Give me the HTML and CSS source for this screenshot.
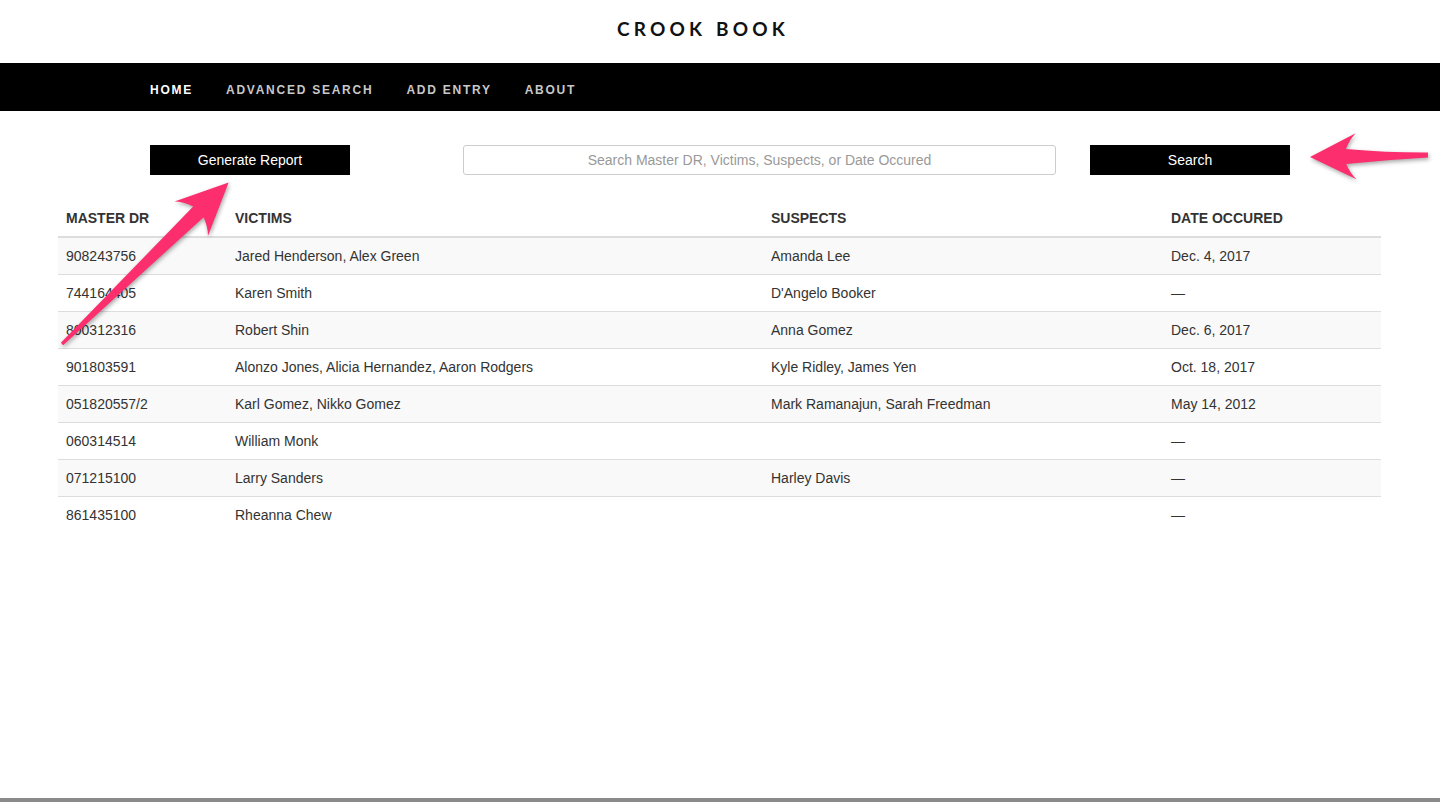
FILE: index.html
```html
<!DOCTYPE html>
<html>
<head>
<meta charset="utf-8">
<title>CrookBook</title>
<link rel="stylesheet" href="styles.css">
</head>
<body>
<div class="page">
  <header class="brand">
    <h1 class="logo">CROOK BOOK</h1>
  </header>
  <nav class="navbar">
    <div class="container nav-inner">
      <a class="nav-link active">HOME</a>
      <a class="nav-link">ADVANCED SEARCH</a>
      <a class="nav-link">ADD ENTRY</a>
      <a class="nav-link">ABOUT</a>
    </div>
  </nav>
  <main class="main">
    <div class="container toolbar">
      <button class="btn btn-report">Generate Report</button>
      <input class="search-input" type="text" placeholder="Search Master DR, Victims, Suspects, or Date Occured">
      <button class="btn btn-search">Search</button>
    </div>
    <table class="table">
      <thead>
        <tr>
          <th class="c-dr">MASTER DR</th>
          <th class="c-vic">VICTIMS</th>
          <th class="c-sus">SUSPECTS</th>
          <th class="c-date">DATE OCCURED</th>
        </tr>
      </thead>
      <tbody>
        <tr><td>908243756</td><td>Jared Henderson, Alex Green</td><td>Amanda Lee</td><td>Dec. 4, 2017</td></tr>
        <tr><td>744164405</td><td>Karen Smith</td><td>D'Angelo Booker</td><td>—</td></tr>
        <tr><td>800312316</td><td>Robert Shin</td><td>Anna Gomez</td><td>Dec. 6, 2017</td></tr>
        <tr><td>901803591</td><td>Alonzo Jones, Alicia Hernandez, Aaron Rodgers</td><td>Kyle Ridley, James Yen</td><td>Oct. 18, 2017</td></tr>
        <tr><td>051820557/2</td><td>Karl Gomez, Nikko Gomez</td><td>Mark Ramanajun, Sarah Freedman</td><td>May 14, 2012</td></tr>
        <tr><td>060314514</td><td>William Monk</td><td></td><td>—</td></tr>
        <tr><td>071215100</td><td>Larry Sanders</td><td>Harley Davis</td><td>—</td></tr>
        <tr><td>861435100</td><td>Rheanna Chew</td><td></td><td>—</td></tr>
      </tbody>
    </table>
  </main>
  <div class="bottom-strip"></div>
  <svg class="arrows" width="1440" height="802" viewBox="0 0 1440 802" xmlns="http://www.w3.org/2000/svg">
    <g transform="translate(62,344) rotate(-44.1)">
      <path d="M0 -1.6 L190 -7.5 Q186 -18 180 -24 L232 0 L180 24 Q186 18 190 7.5 L0 1.6 Z" fill="#fd2e6d"/>
    </g>
    <g transform="translate(1428,155) rotate(179)">
      <path d="M0 -2.5 Q40 -4 82 -7.5 Q78 -17 72 -23 L118 0 L72 23 Q78 17 82 7.5 Q40 3 0 2.5 Z" fill="#fd2e6d"/>
    </g>
  </svg>
</div>
</body>
</html>
```
FILE: styles.css
```css
* { box-sizing: border-box; }
html, body { margin: 0; padding: 0; }
body {
  font-family: "Liberation Sans", Arial, Helvetica, sans-serif;
  font-size: 14px;
  color: #333;
  background: #fff;
  width: 1440px;
  height: 802px;
  overflow: hidden;
}
.page {
  position: relative;
  height: 802px;
  display: flex;
  flex-direction: column;
}
.brand {
  height: 63px;
  display: flex;
  align-items: center;
  justify-content: center;
  padding-bottom: 7px;
}
.logo {
  margin: 0 34px 0 0;
  font-family: Lato, "DejaVu Sans", sans-serif;
  font-weight: bold;
  font-size: 19px;
  letter-spacing: 4.2px;
  word-spacing: 1px;
  color: #111;
}
.container {
  width: 1140px;
  margin: 0 auto;
}
.navbar {
  background: #000;
  height: 48px;
}
.nav-inner {
  display: flex;
  align-items: center;
  height: 48px;
  gap: 33px;
  padding-top: 6px;
}
.nav-link {
  font-size: 12px;
  font-weight: bold;
  letter-spacing: 1.75px;
  color: #c8c8c8;
  text-decoration: none;
}
.nav-link.active { color: #fff; }
.main { flex: 1; }
.toolbar {
  display: flex;
  align-items: center;
  margin-top: 34px;
  height: 30px;
}
.btn {
  width: 200px;
  height: 30px;
  background: #000;
  color: #fff;
  border: 0;
  font-family: "Liberation Sans", Arial, sans-serif;
  font-size: 14px;
  padding: 0;
}
.btn-report { margin-right: 113px; }
.search-input {
  width: 593px;
  height: 30px;
  border: 1px solid #ccc;
  border-radius: 3px;
  font-family: "Liberation Sans", Arial, sans-serif;
  font-size: 14px;
  text-align: center;
  color: #555;
  margin-right: 34px;
  padding: 0 8px;
}
.search-input::placeholder { color: #999; }
.table {
  margin: 25px 59px 0 58px;
  width: 1323px;
  border-collapse: collapse;
}
.table th, .table td {
  padding: 8px;
  line-height: 20px;
  text-align: left;
  vertical-align: top;
}
.table th {
  font-weight: bold;
  border-bottom: 2px solid #ddd;
}
.table td { border-top: 1px solid #ddd; }
.table tbody tr:nth-child(odd) { background: #f9f9f9; }
.table tbody tr:first-child td { border-top: 0; }
.c-dr { width: 169px; }
.c-vic { width: 536px; }
.c-sus { width: 400px; }
.c-date { width: 218px; }
.bottom-strip {
  height: 4px;
  background: #8a8a8a;
}
.arrows {
  position: absolute;
  left: 0;
  top: 0;
  pointer-events: none;
  filter: drop-shadow(1px 2px 2px rgba(0,0,0,0.35));
}
```
